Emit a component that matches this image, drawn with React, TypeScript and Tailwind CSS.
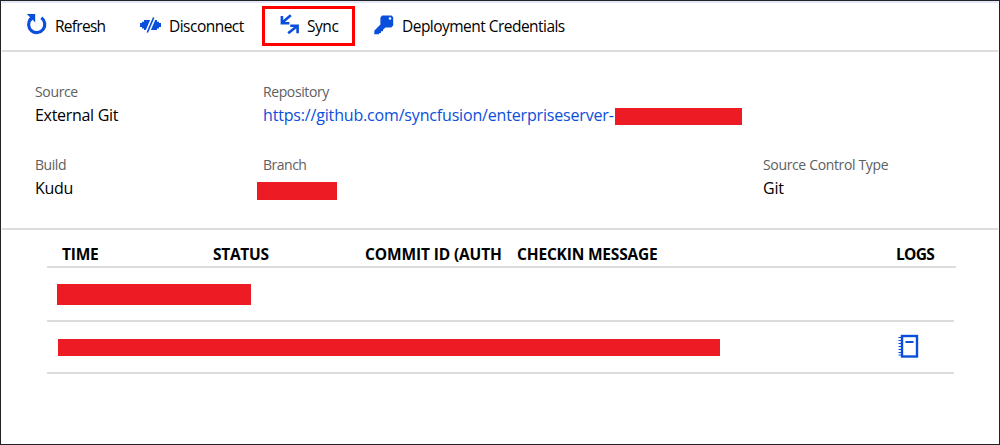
import type { ReactNode } from "react";

function RefreshIcon() {
  return (
    <svg width="21" height="22" viewBox="0 0 21 22" className="block">
      <path d="M15.3 4.8 A8.1 8.1 0 1 1 4.7 6" fill="none" stroke="#0a4fdc" strokeWidth="3.2" />
      <path d="M.8 1h8.4v8.4L6.6 6.8 4.8 8.6 2.2 6.2l1.9-2z" fill="#0a4fdc" />
    </svg>
  );
}

function DisconnectIcon() {
  return (
    <svg width="21" height="16" viewBox="0 0 21 16" className="block">
      <path
        d="M0 6h2V4.8h2V3h13v1.8h2V6h2v4h-2v1.4h-2V13H4v-1.6H2V10H0z"
        fill="#0a4fdc"
      />
      <path d="M13.9 0 7.1 16" stroke="#fff" strokeWidth="4.6" fill="none" />
      <path d="M13.7.5 7.3 15.5" stroke="#0a4fdc" strokeWidth="1.7" fill="none" />
    </svg>
  );
}

function SyncIcon() {
  return (
    <svg width="20" height="21" viewBox="0 0 20 21" className="block">
      <path
        d="M10.8 1.3 2 8.7M1.9 2v7.2h7.5M8.2 19.3l9-7.4M10.2 11.8h7.4v7.4"
        stroke="#0a4fdc"
        strokeWidth="2.6"
        fill="none"
      />
    </svg>
  );
}

function KeyIcon() {
  return (
    <svg width="20" height="20" viewBox="0 0 20 20" className="block">
      <path
        fillRule="evenodd"
        d="M8.2.5h9.3l1.7 1.7v8.4l-2 2h-5.7L9 14.8v1.4H7V18H5.2v1.2H.3v-3.4L6.4 9.5V2.4z M16 2.2a1.3 1.3 0 1 0 0 2.6 1.3 1.3 0 0 0 0-2.6z"
        fill="#0a4fdc"
      />
    </svg>
  );
}

function LogIcon() {
  return (
    <svg width="21" height="24" viewBox="0 0 21 24" className="block">
      <rect x="4" y="2" width="15" height="20.5" fill="none" stroke="#0a4fdc" strokeWidth="2.4" />
      <path d="M7.5 8h8" stroke="#0a4fdc" strokeWidth="2" />
      <path d="M.5 3.5H4M.5 6.5H4M.5 9.5H4M.5 12.5H4M.5 15.5H4M.5 18.5H4M.5 21H4" stroke="#0a4fdc" strokeWidth="1.2" />
    </svg>
  );
}

function Field({ label, children }: { label: ReactNode; children: ReactNode }) {
  return (
    <div className="whitespace-nowrap">
      <div className="h-[22px] text-[14px] leading-[22px] text-[#606060]">{label}</div>
      <div className="flex h-6 items-center text-[16px] leading-6 text-black">{children}</div>
    </div>
  );
}

function Redacted({ className }: { className: string }) {
  return <span className={`block shrink-0 bg-[#ed1c24] ${className}`} />;
}

export default function App() {
  return (
    <div className="flex h-[445px] w-[1000px] flex-col overflow-hidden border border-[#222] bg-white px-px font-['Open_Sans','Noto_Sans',sans-serif] text-black">
      <header className="flex h-[51px] shrink-0 items-start border-t-2 border-b-2 border-t-[#e4e7fb] border-b-[#dcdcdc] text-[15.5px] leading-[26px] whitespace-nowrap">
        <div className="flex w-[260px] shrink-0 pt-[10px] pl-[24px]">
          <div className="flex w-[114px]">
            <RefreshIcon />
            <span className="ml-2 tracking-[-0.72px]">Refresh</span>
          </div>
          <div className="flex">
            <span className="pt-[4px]"><DisconnectIcon /></span>
            <span className="ml-2 tracking-[-0.52px]">Disconnect</span>
          </div>
        </div>
        <div className="mt-[3px] flex h-[40px] w-[93px] shrink-0 border-3 border-[#fe0000] pt-[4px] pl-[15px]">
          <span className="pt-px"><SyncIcon /></span>
          <span className="ml-[7px] tracking-[-0.45px]">Sync</span>
        </div>
        <div className="flex pt-[10px] pl-[19px]">
          <span className="pt-[2px]"><KeyIcon /></span>
          <span className="ml-2 tracking-[-0.53px]">Deployment Credentials</span>
        </div>
      </header>

      <section className="grid h-[178px] shrink-0 grid-cols-[228px_500px_1fr] grid-rows-[73px_73px] border-b-2 border-[#dcdcdc] pt-[29px] pl-[33px]">
        <Field label={<span className="tracking-[-0.35px]">Source</span>}>
          <span className="tracking-[-0.3px]">External Git</span>
        </Field>
        <Field label={<span className="tracking-[-0.4px]">Repository</span>}>
          <span className="w-[352px] tracking-[-0.17px] text-[#0a4fdc]">https://github.com/syncfusion/enterpriseserver-</span>
          <Redacted className="mt-[3px] h-[17px] w-[127px]" />
        </Field>
        <div />
        <Field label={<span className="tracking-[-0.45px]">Build</span>}>
          <span className="tracking-[-0.3px]">Kudu</span>
        </Field>
        <Field label={<span className="tracking-[-0.5px]">Branch</span>}>
          <Redacted className="-ml-1.5 mt-[5px] h-[18px] w-[80px]" />
        </Field>
        <Field label={<span className="tracking-[-0.35px]">Source Control Type</span>}>
          <span className="tracking-[-0.2px]">Git</span>
        </Field>
      </section>

      <section className="mr-[42px] ml-[45px] whitespace-nowrap">
        <div className="grid h-[38px] grid-cols-[151px_152px_152px_379px_1fr] border-b-2 border-[#dcdcdc] pt-[11px] pl-[15px] text-[15.5px] leading-[26px] font-bold">
          <span className="tracking-[-0.2px]">TIME</span>
          <span className="tracking-[-0.3px]">STATUS</span>
          <span className="tracking-[-0.13px]">COMMIT ID (AUTH</span>
          <span className="tracking-[-0.18px]">CHECKIN MESSAGE</span>
          <span className="tracking-[-0.7px]">LOGS</span>
        </div>
        <div className="mr-[2px] h-[54px] border-b-2 border-[#dcdcdc] pt-[16px] pl-[10px]">
          <Redacted className="h-[21px] w-[194px]" />
        </div>
        <div className="mr-[2px] flex h-[52px] border-b-2 border-[#dcdcdc] pl-[11px]">
          <Redacted className="mt-[17px] h-[17px] w-[662px]" />
          <span className="mt-[12px] ml-[178px]"><LogIcon /></span>
        </div>
      </section>
    </div>
  );
}
